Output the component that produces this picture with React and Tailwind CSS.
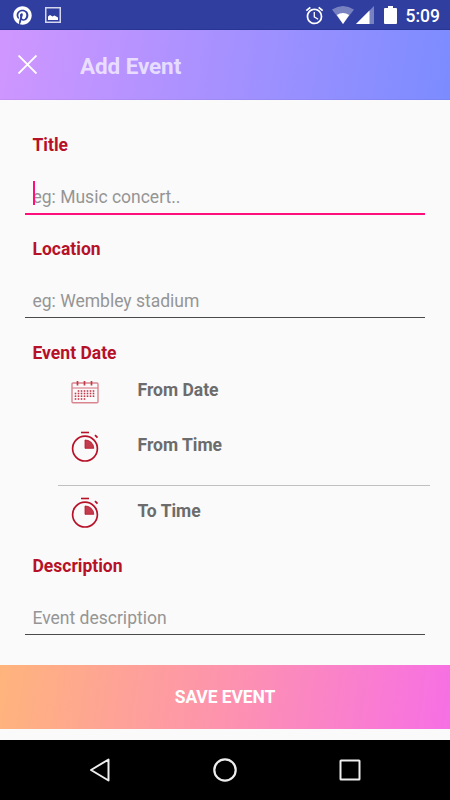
import { FaPinterest } from "react-icons/fa";
import { MdAlarm } from "react-icons/md";

function StatusBar() {
    return (
        <div className="h-[30px] bg-[#303f9f] flex items-center justify-between pl-[13px] pr-[10px] pt-px text-white border-b border-[#283593]">
            <div className="flex items-center gap-[13px]">
                <FaPinterest className="size-[19px]" />
                <svg className="size-4" viewBox="0 0 16 16">
                    <rect x="0.75" y="0.75" width="14.5" height="14.5" fill="none" stroke="#d3d6ee" strokeWidth="1.5" />
                    <path d="M3 13V9.5L5 8L7.5 9.5L9.5 8.5L13 10.5V13Z" fill="white" />
                </svg>
            </div>
            <div className="flex items-center">
                <MdAlarm className="size-[21px]" />
                <svg className="w-[22px] h-[18px] ml-[7px]" viewBox="0 0 22 18">
                    <path d="M0 3.6Q11 -3.6 22 3.6L11 18Z" fill="white" fillOpacity="0.35" />
                    <path d="M4.8 9Q11 5 17.2 9L11 18Z" fill="white" />
                </svg>
                <svg className="w-[18px] h-[18px] ml-[2px]" viewBox="0 0 18 18">
                    <path d="M18 0V18H0Z" fill="white" fillOpacity="0.35" />
                    <path d="M13.5 4.5V18H0Z" fill="white" />
                </svg>
                <svg className="w-[13px] h-[18px] ml-[10px]" viewBox="0 0 13 18">
                    <path d="M4 0H9V2H12Q13 2 13 3V17Q13 18 12 18H1Q0 18 0 17V3Q0 2 1 2H4Z" fill="white" />
                </svg>
                <span className="ml-[9px] pt-px text-[17.5px] leading-5 font-medium">5:09</span>
            </div>
        </div>
    );
}

function Header() {
    return (
        <header className="h-[70px] bg-[linear-gradient(99deg,#d096ff,#7b8cff)] flex items-center pl-[18px] border-b border-black/5">
            <svg className="size-[19px]" viewBox="0 0 19 19" fill="none" stroke="white" strokeWidth="1.9">
                <path d="M0.5 0.5L18.5 18.5M18.5 0.5L0.5 18.5" />
            </svg>
            <h1 className="ml-[43px] mt-[3px] text-[22.5px] tracking-[-0.1px] leading-7 font-bold text-white/70">Add Event</h1>
        </header>
    );
}

function Label({ children }) {
    return <h2 className="h-6 pl-[7.5px] text-[17.5px] leading-6 font-bold text-[#b71128]">{children}</h2>;
}

function Field({ hint, focused }) {
    return (
        <div className={focused ? "h-[58px] pt-[28px] pl-[7.5px] border-b-2 border-[#ff0f7b] relative" : "h-[57px] pt-[28px] pl-[7.5px] border-b border-[#4a4a4a]"}>
            {focused && <span className="absolute left-2 top-6 w-[2px] h-6 bg-[#ff0f7b]" />}
            <p className="h-6 text-[17.5px] leading-6 text-[#959595]">{hint}</p>
        </div>
    );
}

function CalendarIcon() {
    const dots = [
        [7.5, 10], [10.5, 10], [13.5, 10], [16.5, 10], [19.5, 10], [22.5, 10],
        [4.5, 12.5], [7.5, 12.5], [10.5, 12.5], [13.5, 12.5], [16.5, 12.5], [19.5, 12.5], [22.5, 12.5],
        [4.5, 15.2], [7.5, 15.2], [10.5, 15.2], [13.5, 15.2], [16.5, 15.2], [19.5, 15.2], [22.5, 15.2],
        [4.5, 18], [7.5, 18], [10.5, 18], [13.5, 18],
    ];
    return (
        <svg className="w-[28px] h-[23px] mt-[4px]" viewBox="0 0 28 23">
            <rect x="1" y="2" width="26" height="19.7" rx="1" fill="none" stroke="#d98590" strokeWidth="1.4" />
            <path d="M1 7H27" stroke="#d98590" strokeWidth="1.2" />
            <path d="M6.5 0V4.5M13.5 0V4.5M20.5 0V4.5" stroke="#c23a4c" strokeWidth="1.7" />
            {dots.map(([x, y]) => (
                <rect key={`${x}-${y}`} x={x - 0.8} y={y - 0.8} width="1.6" height="1.6" fill="#c4384c" />
            ))}
        </svg>
    );
}

function TimerIcon() {
    return (
        <svg className="w-[28px] h-[32px] mt-[3px]" viewBox="0 0 28 32" fill="none" stroke="#b71128">
            <circle cx="14" cy="17.6" r="12.4" strokeWidth="1.7" />
            <path d="M10 1.5H18" strokeWidth="1.6" />
            <path d="M24 4.2L26.5 6.7" strokeWidth="1.8" />
            <path d="M14 9A8.5 8.5 0 0 1 22.8 17.3H14Z" fill="#c43b4e" strokeWidth="0.8" />
        </svg>
    );
}

function PickerRow({ icon, children }) {
    return (
        <div className="h-8 flex items-center pl-[46px]">
            {icon}
            <span className="ml-[38.5px] text-[17.5px] leading-6 font-bold text-[#6c6c6c]">{children}</span>
        </div>
    );
}

function NavBar() {
    return (
        <nav className="h-[60px] bg-black flex items-center justify-between px-[87px]">
            <svg className="size-[26px]" viewBox="0 0 26 26" fill="none" stroke="#eee" strokeWidth="2" strokeLinejoin="round">
                <path d="M21.5 2.5V23.5L4 13Z" />
            </svg>
            <svg className="size-[26px]" viewBox="0 0 26 26" fill="none" stroke="#eee" strokeWidth="2.2">
                <circle cx="13" cy="13" r="10.7" />
            </svg>
            <svg className="size-[26px]" viewBox="0 0 26 26" fill="none" stroke="#eee" strokeWidth="2">
                <rect x="3.5" y="3.5" width="19" height="19" rx="0.5" />
            </svg>
        </nav>
    );
}

export default function App() {
    return (
        <div className="w-[450px] h-[800px] flex flex-col bg-[#fafafa] font-[Roboto,sans-serif] overflow-hidden">
            <StatusBar />
            <Header />
            <main className="h-[565px] pt-[33px] px-[25px]">
                <Label>Title</Label>
                <Field hint="eg: Music concert.." focused />
                <div className="mt-[22px]">
                    <Label>Location</Label>
                    <Field hint="eg: Wembley stadium" />
                </div>
                <div className="mt-[23px]">
                    <Label>Event Date</Label>
                    <div className="mt-[9px]">
                        <PickerRow icon={<CalendarIcon />}>From Date</PickerRow>
                    </div>
                    <div className="mt-[23px]">
                        <PickerRow icon={<TimerIcon />}>From Time</PickerRow>
                    </div>
                    <div className="mt-[24px] ml-[33px] -mr-[5px] h-px bg-[#c0c0c0]" />
                    <div className="mt-[9px]">
                        <PickerRow icon={<TimerIcon />}>To Time</PickerRow>
                    </div>
                </div>
                <div className="mt-[27px]">
                    <Label>Description</Label>
                    <Field hint="Event description" />
                </div>
            </main>
            <button className="h-16 mb-[11px] pt-px bg-[linear-gradient(98deg,#ffb47c,#fd93ae_50%,#f76fe5)] text-[17.5px] tracking-[-0.1px] font-bold text-white">
                SAVE EVENT
            </button>
            <NavBar />
        </div>
    );
}
